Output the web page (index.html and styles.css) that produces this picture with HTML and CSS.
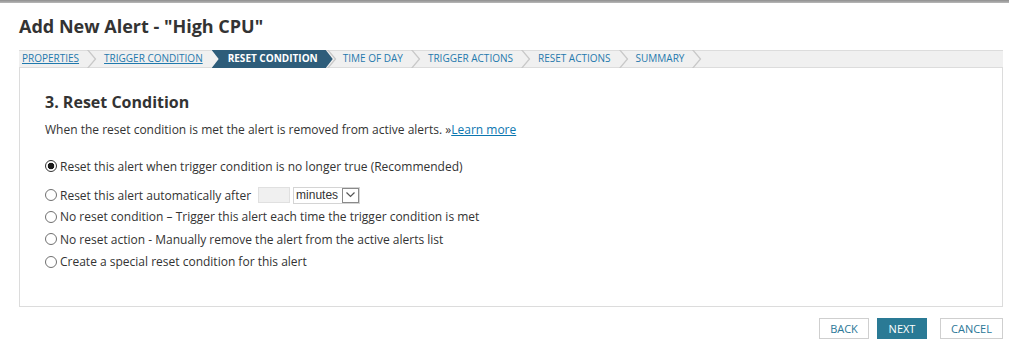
FILE: index.html
```html
<!DOCTYPE html>
<html>
<head>
<meta charset="utf-8">
<link rel="stylesheet" href="styles.css">
</head>
<body>
<div class="topbar"></div>
<div class="page">
  <h1 class="title">Add New Alert - "High CPU"</h1>
  <nav class="steps">
    <a class="step done first" href="#">PROPERTIES</a>
    <svg class="sep" width="11" height="18" viewBox="0 0 11 18"><polyline points="1,-1 9.5,9 1,19" /></svg>
    <a class="step done before-active" href="#">TRIGGER CONDITION</a>
    <span class="step active">RESET CONDITION</span>
    <svg class="sep after-active" width="11" height="18" viewBox="0 0 11 18"><polyline points="1,-1 9.5,9 1,19" /></svg>
    <span class="step todo">TIME OF DAY</span>
    <svg class="sep" width="11" height="18" viewBox="0 0 11 18"><polyline points="1,-1 9.5,9 1,19" /></svg>
    <span class="step todo">TRIGGER ACTIONS</span>
    <svg class="sep" width="11" height="18" viewBox="0 0 11 18"><polyline points="1,-1 9.5,9 1,19" /></svg>
    <span class="step todo">RESET ACTIONS</span>
    <svg class="sep" width="11" height="18" viewBox="0 0 11 18"><polyline points="1,-1 9.5,9 1,19" /></svg>
    <span class="step todo">SUMMARY</span>
    <svg class="sep" width="11" height="18" viewBox="0 0 11 18"><polyline points="1,-1 9.5,9 1,19" /></svg>
  </nav>
  <section class="panel">
    <h2 class="heading">3. Reset Condition</h2>
    <p class="desc">When the reset condition is met the alert is removed from active alerts. »<a href="#" class="link">Learn more</a></p>
    <div class="options">
      <label class="opt first-opt"><input type="radio" name="reset" checked><span>Reset this alert when trigger condition is no longer true (Recommended)</span></label>
      <label class="opt with-input"><input type="radio" name="reset"><span>Reset this alert automatically after</span>
        <span class="num"></span>
        <span class="select"><span class="select-text">minutes</span><span class="select-btn"><svg width="11" height="8" viewBox="0 0 11 8"><polyline points="1.5,1.5 5.5,5.5 9.5,1.5" /></svg></span></span>
      </label>
      <label class="opt"><input type="radio" name="reset"><span>No reset condition – Trigger this alert each time the trigger condition is met</span></label>
      <label class="opt"><input type="radio" name="reset"><span>No reset action - Manually remove the alert from the active alerts list</span></label>
      <label class="opt"><input type="radio" name="reset"><span>Create a special reset condition for this alert</span></label>
    </div>
  </section>
  <div class="actions">
    <button class="btn">BACK</button>
    <button class="btn primary">NEXT</button>
    <button class="btn cancel">CANCEL</button>
  </div>
</div>
</body>
</html>
```
FILE: styles.css
```css
html, body {
  margin: 0;
  padding: 0;
  background: #fff;
}
body {
  font-family: "Open Sans", "Liberation Sans", sans-serif;
  color: #333;
}
.topbar {
  height: 3px;
  background: linear-gradient(#8e8e8e, #b8b8b8);
}
.page {
  padding: 0 6px 0 19px;
}
.title {
  margin: 11px 0 0;
  font-size: 18px;
  line-height: 24px;
  font-weight: 700;
  color: #333;
}
.steps {
  margin-top: 12px;
  height: 18px;
  box-sizing: border-box;
  border-top: 1px solid #dcdcdc;
  border-bottom: 1px solid #dcdcdc;
  background: #f0f0f0;
  display: flex;
  align-items: center;
  font-size: 10px;
}
.step {
  line-height: 15px;
  padding: 0 7px;
  margin-top: -1px;
  color: #1f79ad;
  white-space: nowrap;
}
.step.done {
  text-decoration: underline;
}
.step.first {
  padding-left: 3px;
}
.step.before-active {
  padding-right: 9px;
}
.step.active {
  align-self: stretch;
  margin: -1px 0;
  line-height: 17px;
  padding: 0 15px 1px 16px;
  background: #2e5d7a;
  color: #fff;
  font-weight: 700;
  clip-path: polygon(0 0, calc(100% - 7px) 0, 100% 50%, calc(100% - 7px) 100%, 0 100%, 7px 50%);
}
.step.todo {
  padding-left: 7px;
}
.sep {
  flex: none;
  display: block;
}
.sep polyline {
  fill: none;
  stroke: #c8c8c8;
  stroke-width: 1.3;
}
.sep.after-active {
  margin-left: -7px;
}
.sep.after-active + .step {
  padding-left: 6px;
}
.panel {
  border: 1px solid #dcdcdc;
  border-top: none;
  padding: 23px 25px 33px;
}
.heading {
  margin: 0;
  font-size: 16px;
  line-height: 22px;
  font-weight: 700;
  color: #333;
}
.desc {
  margin: 8px 0 0;
  font-size: 12px;
  line-height: 18px;
  color: #333;
}
.link {
  color: #0b76b0;
  text-decoration: underline;
}
.options {
  margin-top: 16px;
  font-size: 12px;
  color: #333;
}
.opt {
  display: flex;
  align-items: center;
  height: 22.5px;
  white-space: nowrap;
}
.opt.first-opt {
  margin-bottom: 7px;
}
.opt.with-input {
  height: 21px;
}
.opt input {
  appearance: none;
  -webkit-appearance: none;
  width: 12px;
  height: 12px;
  margin: 0 3px 0 0;
  border: 1px solid #707070;
  border-radius: 50%;
  background: #fff;
  box-sizing: border-box;
  flex: none;
}
.opt input:checked {
  border-color: #333;
  background: radial-gradient(circle, #1a1a1a 0, #1a1a1a 3px, #fff 3.6px);
}
.num {
  display: inline-block;
  width: 32px;
  height: 16px;
  box-sizing: border-box;
  margin-left: 7px;
  border: 1px solid #e0e0e0;
  background: #f0f0f0;
}
.select {
  display: inline-flex;
  align-items: center;
  margin-left: 3px;
  height: 17px;
  box-sizing: border-box;
  border: 1px solid #d4d4d4;
  background: #fff;
  font-family: "Liberation Sans", Arial, sans-serif;
  font-size: 12px;
  color: #333;
}
.select-text {
  padding: 0 4px 0 2px;
  line-height: 15px;
}
.select-btn {
  display: flex;
  align-items: center;
  justify-content: center;
  width: 17px;
  height: 15px;
  box-sizing: border-box;
  border: 1px solid #8a8a8a;
}
.select-btn polyline {
  fill: none;
  stroke: #555;
  stroke-width: 1.2;
}
.actions {
  display: flex;
  justify-content: flex-end;
  margin-top: 11px;
}
.btn {
  font-family: "Open Sans", "Liberation Sans", sans-serif;
  font-size: 11px;
  height: 21px;
  box-sizing: border-box;
  padding: 0;
  border: 1px solid #cfcfcf;
  background: #fff;
  color: #2b7797;
  width: 50px;
  margin-left: 8px;
}
.btn.primary {
  background: #2a7a95;
  border-color: #2a7a95;
  color: #fff;
}
.btn.cancel {
  width: 63px;
  margin-left: 13px;
}
```
